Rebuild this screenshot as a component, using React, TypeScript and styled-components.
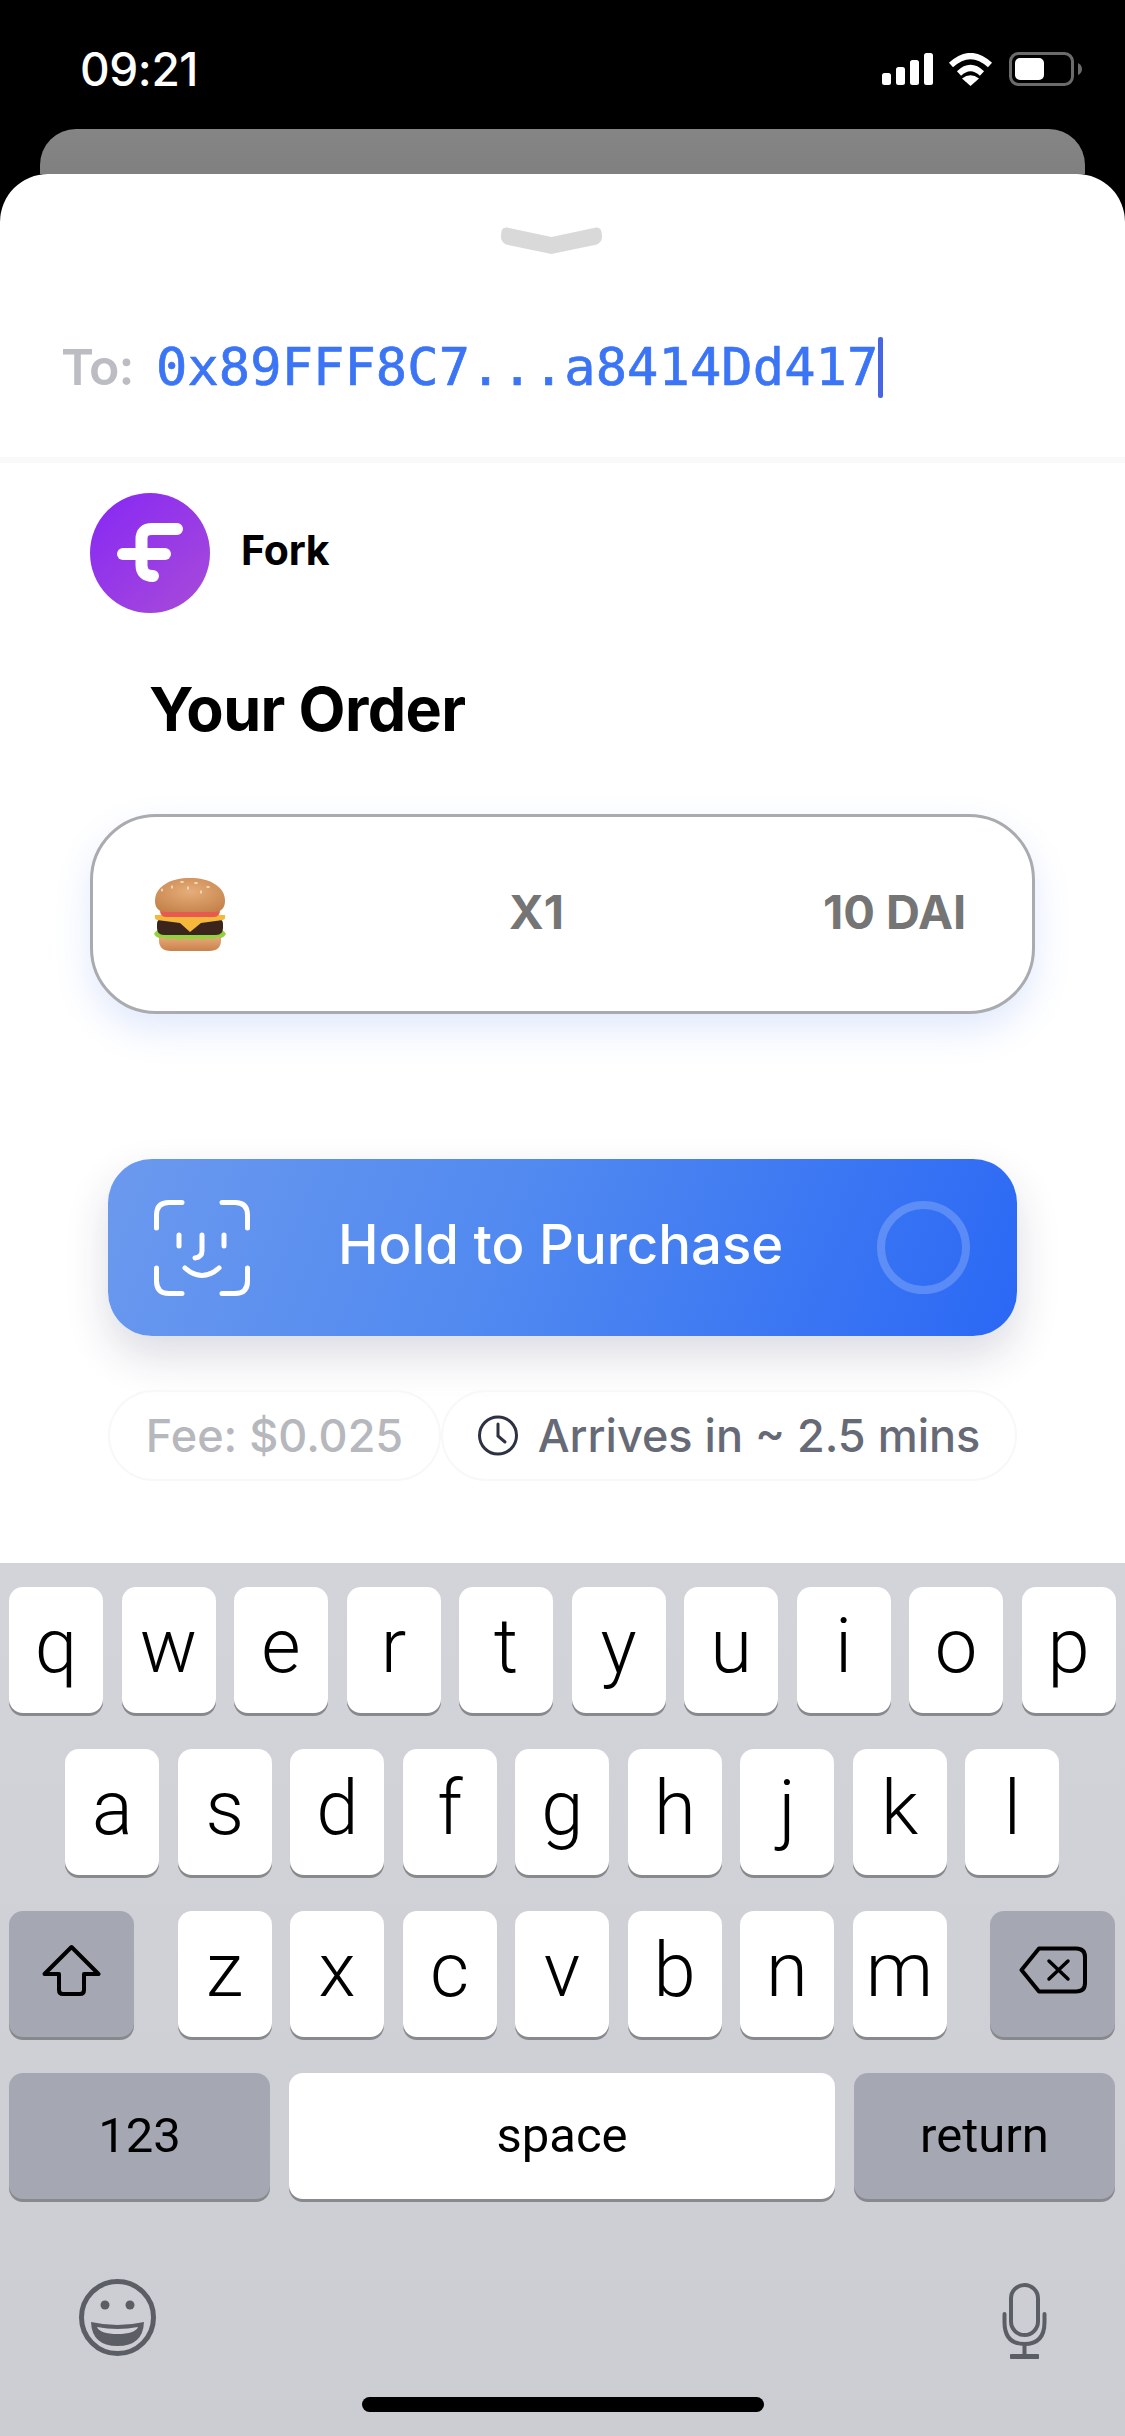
import React from "react";
import styled, { createGlobalStyle } from "styled-components";

const Global = createGlobalStyle`
  html, body { margin: 0; padding: 0; background: #000; }
  #root { width: 1125px; height: 2436px; }
  * { box-sizing: border-box; }
`;

const Screen = styled.div`
  width: 1125px;
  height: 2436px;
  background: #000;
  display: flex;
  flex-direction: column;
  overflow: hidden;
  font-family: Inter, "Liberation Sans", sans-serif;
`;

const StatusBar = styled.div`
  height: 129px;
  flex: none;
  padding: 47px 43px 0 80px;
  display: flex;
  justify-content: space-between;
  align-items: flex-start;
`;

const Time = styled.div`
  color: #fff;
  font: 500 46px/44px Inter, sans-serif;
  letter-spacing: -0.4px;
`;

const StatusIcons = styled.div`
  display: flex;
  align-items: center;
  gap: 15px;
  margin-top: 5px;
`;

const BackCard = styled.div`
  flex: none;
  height: 45px;
  margin: 0 40px;
  background: linear-gradient(#858585, #808080);
  border-radius: 36px 36px 0 0;
`;

const Sheet = styled.div`
  flex: none;
  height: 2262px;
  background: #fff;
  border-radius: 48px 48px 0 0;
  display: flex;
  flex-direction: column;
`;

const AddressHeader = styled.div`
  height: 283px;
  flex: none;
  padding-top: 53px;
  display: flex;
  flex-direction: column;
  align-items: center;
`;

const GrabberSlot = styled.div`
  height: 27px;
  margin-right: 22px;
`;

const AddressRow = styled.div`
  align-self: stretch;
  height: 61px;
  margin-top: 83px;
  padding-left: 61px;
  display: flex;
  align-items: center;
`;

const ToLabel = styled.span`
  font: 600 50px/61px Inter, sans-serif;
  color: #bcbdc3;
  letter-spacing: -1px;
  width: 95px;
`;

const Address = styled.span`
  font: 400 52px/61px "DejaVu Sans Mono", monospace;
  color: #3b74f5;
  -webkit-text-stroke: 0.7px #3b74f5;
  letter-spacing: 0.1px;
`;

const Caret = styled.span`
  width: 5px;
  height: 61px;
  border-radius: 2px;
  background: #4766e6;
`;

const Divider = styled.div`
  height: 6px;
  flex: none;
  background: #f9f9f9;
`;

const Merchant = styled.div`
  flex: none;
  margin-top: 30px;
  padding-left: 90px;
  display: flex;
  align-items: flex-start;
  gap: 31px;
`;

const MerchantName = styled.div`
  font: 700 41px/48px Inter, sans-serif;
  color: #000;
  margin-top: 33px;
  letter-spacing: -0.2px;
`;

const Title = styled.h1`
  flex: none;
  margin: 62px 0 0 149px;
  height: 68px;
  font: 700 61px/68px Inter, sans-serif;
  color: #000;
  letter-spacing: -0.6px;
`;

const OrderCard = styled.div`
  flex: none;
  margin: 71px 90px 0;
  height: 200px;
  border: 3px solid #aaabae;
  border-radius: 66px;
  background: #fff;
  box-shadow: 0 16px 36px rgba(70, 120, 235, 0.16);
  display: flex;
  align-items: center;
  padding: 0 62px 0 61px;
`;

const OrderText = styled.span<{ $left?: number }>`
  font: 700 47px/52px Inter, sans-serif;
  color: #757575;
  margin-left: ${(p) => p.$left ?? 0}px;
  margin-top: -4px;
`;

const PurchaseButton = styled.div`
  margin: 145px 108px 0;
  height: 177px;
  flex: none;
  border-radius: 44px;
  background: linear-gradient(112deg, #6b99ee 0%, #5089f0 45%, #2a68f5 100%);
  box-shadow: 0 20px 44px rgba(30, 40, 80, 0.16);
  display: flex;
  align-items: center;
  padding: 0 47px 0 46px;
  color: #fff;
`;

const PurchaseLabel = styled.span`
  font: 500 54.5px/60px Inter, sans-serif;
  margin-left: 88px;
  margin-top: -8px;
`;

const Ring = styled.div`
  margin-left: auto;
  width: 93px;
  height: 93px;
  border-radius: 50%;
  border: 8px solid rgba(255, 255, 255, 0.2);
`;

const Chips = styled.div`
  flex: none;
  display: flex;
  margin: 54px 108px 0;
`;

const Chip = styled.div<{ $width: number; $muted?: boolean }>`
  width: ${(p) => p.$width}px;
  height: 91px;
  border: 2px solid #f8f8f9;
  border-radius: 46px;
  display: flex;
  align-items: center;
  justify-content: center;
  gap: 20px;
  font: 500 45px/50px Inter, sans-serif;
  color: ${(p) => (p.$muted ? "#b6b8bd" : "#666a76")};
`;

const Keyboard = styled.div`
  height: 873px;
  flex: none;
  margin-top: auto;
  background: linear-gradient(#d2d4da, #cccdd2);
  padding-top: 24px;
  display: flex;
  flex-direction: column;
  gap: 36px;
`;

const KeyRow = styled.div<{ $between?: boolean }>`
  height: 126px;
  flex: none;
  display: flex;
  justify-content: ${(p) => (p.$between ? "space-between" : "center")};
  gap: 18.5px;
  padding: 0 ${(p) => (p.$between ? 10 : 9.5)}px 0 9px;
`;

const LetterGroup = styled.div`
  display: flex;
  gap: 18.5px;
`;

const Key = styled.div<{ $width?: number; $dark?: boolean; $small?: boolean }>`
  width: ${(p) => p.$width ?? 94}px;
  height: 126px;
  flex: none;
  border-radius: 14px;
  background: ${(p) => (p.$dark ? "#a5a8b2" : "#fff")};
  box-shadow: 0 3px 0 #88898d;
  display: flex;
  align-items: center;
  justify-content: center;
  color: #000;
  font-family: Roboto, "Liberation Sans", Arial, sans-serif;
  font-weight: ${(p) => (p.$small ? 400 : 300)};
  font-size: ${(p) => (p.$small ? 49 : 76)}px;
  line-height: 1;
  padding-bottom: ${(p) => (p.$small ? 2 : 8)}px;
`;

const KeyboardFooter = styled.div`
  flex: none;
  margin-top: 43px;
  height: 80px;
  padding: 0 78px 0 79px;
  display: flex;
  justify-content: space-between;
  align-items: flex-start;
`;

const MicSlot = styled.div`
  margin-top: 5px;
`;

const HomeBar = styled.div`
  width: 402px;
  height: 15px;
  flex: none;
  border-radius: 8px;
  background: #000;
  align-self: center;
  margin-top: 3px;
`;

const Signal = () => (
  <svg width="51" height="32" viewBox="0 0 51 32">
    <rect x="0" y="20" width="9" height="12" rx="2.5" fill="#fff" />
    <rect x="14" y="14" width="9" height="18" rx="2.5" fill="#fff" />
    <rect x="28" y="7" width="9" height="25" rx="2.5" fill="#fff" />
    <rect x="42" y="0" width="9" height="32" rx="2.5" fill="#fff" />
  </svg>
);

const Wifi = () => (
  <svg width="45" height="33" viewBox="0 0 45 33">
    <path d="M3 12 Q22.5 -6 42 12" fill="none" stroke="#fff" strokeWidth="6" />
    <path d="M11 20.5 Q22.5 9.5 34 20.5" fill="none" stroke="#fff" strokeWidth="6" />
    <path d="M22.5 33 L14 25.5 Q22.5 19 31 25.5 Z" fill="#fff" />
  </svg>
);

const Battery = () => (
  <svg width="73" height="34" viewBox="0 0 73 34" style={{ marginLeft: 1 }}>
    <rect x="1.5" y="1.5" width="62" height="31" rx="8" fill="none" stroke="#6b6b6b" strokeWidth="3" />
    <rect x="6" y="6" width="29" height="22" rx="5" fill="#fff" />
    <path d="M69 11 Q73 13 73 17 Q73 21 69 23 Z" fill="#6b6b6b" />
  </svg>
);

const Grabber = () => (
  <svg width="101" height="27" viewBox="0 0 101 27">
    <path
      d="M6 0.5 Q2 0 0.8 3 Q0 6 0 10 Q0 15 5 17.5 L50.5 27 L96 17.5 Q101 15 101 10 Q101 6 100 3 Q98.5 0 95 0.5 L50.5 10 Z"
      fill="#d9d9d9"
    />
  </svg>
);

const ForkLogo = () => (
  <svg width="120" height="120" viewBox="0 0 120 120">
    <defs>
      <linearGradient id="forkBg" x1="0.15" y1="0.1" x2="0.9" y2="0.9">
        <stop offset="0" stopColor="#8a2cf1" />
        <stop offset="1" stopColor="#a548db" />
      </linearGradient>
    </defs>
    <circle cx="60" cy="60" r="60" fill="url(#forkBg)" />
    <path d="M87 36 H62 Q51.5 36 51.5 46 V72 Q51.5 83 63 83" fill="none" stroke="#fff" strokeWidth="12" strokeLinecap="round" />
    <path d="M33 61 H75" fill="none" stroke="#fff" strokeWidth="12" strokeLinecap="round" />
  </svg>
);

const Burger = () => (
  <svg width="72" height="73" viewBox="0 0 72 73">
    <defs>
      <radialGradient id="bun" cx="0.5" cy="0.4" r="0.7">
        <stop offset="0" stopColor="#e6ad7a" />
        <stop offset="1" stopColor="#c48149" />
      </radialGradient>
      <linearGradient id="bunLow" x1="0" y1="0" x2="0" y2="1">
        <stop offset="0" stopColor="#eab07c" />
        <stop offset="1" stopColor="#c9814c" />
      </linearGradient>
    </defs>
    <path d="M5 57 H67 V62 Q67 73 55 73 H17 Q5 73 5 62 Z" fill="url(#bunLow)" />
    <path d="M0 56 Q3 51 8 52 H64 Q69 51 72 56 Q68 62 63 59 Q59 63 54 60 Q48 63 43 60 Q37 63 31 60 Q25 63 20 60 Q14 63 9 59 Q4 62 0 56 Z" fill="#93d13f" />
    <path d="M3 46 Q3 41 8 41 H64 Q69 41 69 46 V50 Q69 57 62 57 H10 Q3 57 3 50 Z" fill="#3a241b" />
    <path d="M1 37 H71 Q72 41 69 42 L47 45 L36 54 L26 45 L3 42 Q0 41 1 37 Z" fill="#f5b73c" />
    <path d="M6 32 H66 Q66 39 60 39 H12 Q6 39 6 32 Z" fill="#e65a50" />
    <path d="M1 23 C1 8 17 0 36 0 C55 0 71 8 71 23 C71 31 66 34 60 34 H12 C6 34 1 31 1 23 Z" fill="url(#bun)" />
    <g fill="#f3dcc0">
      <ellipse cx="28" cy="4" rx="2" ry="1" />
      <ellipse cx="42" cy="5" rx="2" ry="1" />
      <ellipse cx="18" cy="9" rx="1" ry="1.8" />
      <ellipse cx="34" cy="10" rx="1" ry="1.8" />
      <ellipse cx="47" cy="14" rx="1" ry="1.8" />
      <ellipse cx="54" cy="9" rx="1.8" ry="1" />
      <ellipse cx="8" cy="12" rx="1" ry="1.6" />
    </g>
  </svg>
);

const FaceId = () => (
  <svg width="96" height="96" viewBox="0 0 96 96" fill="none" stroke="#fff" strokeWidth="5" strokeLinecap="round">
    <path d="M2.5 28 V15 Q2.5 2.5 15 2.5 H28" />
    <path d="M68 2.5 H81 Q93.5 2.5 93.5 15 V28" />
    <path d="M2.5 68 V81 Q2.5 93.5 15 93.5 H28" />
    <path d="M93.5 68 V81 Q93.5 93.5 81 93.5 H68" />
    <path d="M25 35 V46" />
    <path d="M70 35 V46" />
    <path d="M48 35 V51 Q48 57 41 58" />
    <path d="M31 68 Q48 83 65 68" />
  </svg>
);

const Clock = () => (
  <svg width="40" height="41" viewBox="0 0 40 41" fill="none" stroke="#2d3142" strokeWidth="3" strokeLinecap="round">
    <circle cx="20" cy="20.5" r="18.5" />
    <path d="M20 9 V21 L27 27" />
  </svg>
);

const ShiftIcon = () => (
  <svg width="59" height="52" viewBox="0 0 59 52" fill="none" stroke="#000" strokeWidth="4" strokeLinejoin="round">
    <path d="M29.5 3 L56.5 30 H42 V46 Q42 50 38 50 H21 Q17 50 17 46 V30 H2.5 Z" />
  </svg>
);

const DeleteIcon = () => (
  <svg width="68" height="48" viewBox="0 0 68 48" fill="none" stroke="#000" strokeWidth="4" strokeLinejoin="round" strokeLinecap="round">
    <path d="M20 2.5 H57 Q66 2.5 66 11 V37 Q66 45.5 57 45.5 H20 L2.5 24 Z" />
    <path d="M30 15 L49 33 M49 15 L30 33" strokeWidth="3.5" />
  </svg>
);

const EmojiIcon = () => (
  <svg width="77" height="79" viewBox="0 0 77 79">
    <circle cx="38.5" cy="39.5" r="36" fill="none" stroke="#5c5e66" strokeWidth="5" />
    <circle cx="26" cy="27" r="4.5" fill="#5c5e66" />
    <circle cx="51" cy="27" r="4.5" fill="#5c5e66" />
    <path d="M12 44 Q38.5 50 65 44 Q64 68 38.5 68 Q13 68 12 44 Z" fill="#5c5e66" />
    <path d="M18 49 Q38.5 53 59 49 Q56 56 38.5 56 Q21 56 18 49 Z" fill="#d0d1d6" />
  </svg>
);

const MicIcon = () => (
  <svg width="45" height="76" viewBox="0 0 45 76" fill="none" stroke="#5c5e66" strokeWidth="4" strokeLinecap="round">
    <rect x="9" y="2" width="27" height="50" rx="13.5" />
    <path d="M2.5 31 V39 Q2.5 61 22.5 61 Q42.5 61 42.5 39 V31" />
    <path d="M22.5 61 V71" />
    <rect x="8" y="71" width="29" height="5" rx="1" fill="#5c5e66" stroke="none" />
  </svg>
);

const row1 = "qwertyuiop".split("");
const row2 = "asdfghjkl".split("");
const row3 = "zxcvbnm".split("");

export default function App() {
  return (
    <>
      <Global />
      <Screen>
        <StatusBar>
          <Time>09:21</Time>
          <StatusIcons>
            <Signal />
            <Wifi />
            <Battery />
          </StatusIcons>
        </StatusBar>
        <BackCard />
        <Sheet>
          <AddressHeader>
            <GrabberSlot>
              <Grabber />
            </GrabberSlot>
            <AddressRow>
              <ToLabel>To:</ToLabel>
              <Address>0x89FFF8C7...a8414Dd417</Address>
              <Caret />
            </AddressRow>
          </AddressHeader>
          <Divider />
          <Merchant>
            <ForkLogo />
            <MerchantName>Fork</MerchantName>
          </Merchant>
          <Title>Your Order</Title>
          <OrderCard>
            <Burger />
            <OrderText $left={283}>X1</OrderText>
            <OrderText $left={259}>10 DAI</OrderText>
          </OrderCard>
          <PurchaseButton>
            <FaceId />
            <PurchaseLabel>Hold to Purchase</PurchaseLabel>
            <Ring />
          </PurchaseButton>
          <Chips>
            <Chip $width={333} $muted>Fee: $0.025</Chip>
            <Chip $width={576}>
              <Clock />
              Arrives in ~ 2.5 mins
            </Chip>
          </Chips>
          <Keyboard>
            <KeyRow>
              {row1.map((k) => (
                <Key key={k}>{k}</Key>
              ))}
            </KeyRow>
            <KeyRow>
              {row2.map((k) => (
                <Key key={k}>{k}</Key>
              ))}
            </KeyRow>
            <KeyRow $between>
              <Key $width={125} $dark>
                <ShiftIcon />
              </Key>
              <LetterGroup>
                {row3.map((k) => (
                  <Key key={k}>{k}</Key>
                ))}
              </LetterGroup>
              <Key $width={125} $dark>
                <DeleteIcon />
              </Key>
            </KeyRow>
            <KeyRow $between>
              <Key $width={261} $dark $small>123</Key>
              <Key $width={546} $small>space</Key>
              <Key $width={261} $dark $small>return</Key>
            </KeyRow>
            <KeyboardFooter>
              <EmojiIcon />
              <MicSlot>
                <MicIcon />
              </MicSlot>
            </KeyboardFooter>
            <HomeBar />
          </Keyboard>
        </Sheet>
      </Screen>
    </>
  );
}
